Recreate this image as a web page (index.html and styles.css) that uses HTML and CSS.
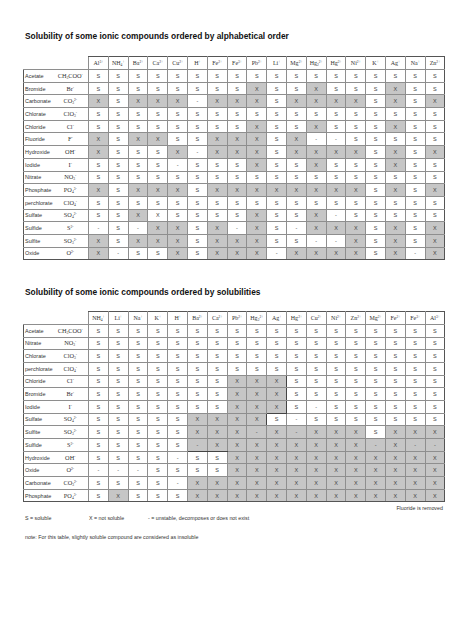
FILE: index.html
```html
<!DOCTYPE html>
<html lang="en">
<head>
<meta charset="utf-8">
<title>Solubility tables</title>
<link rel="stylesheet" href="styles.css">
</head>
<body>
<div class="sheet">
  <h1 class="title">Solubility of some ionic compounds ordered by alphabetical order</h1>
  <table class="sol first-table" id="t1"></table>
  <h1 class="title title-second">Solubility of some ionic compounds ordered by solubilities</h1>
  <table class="sol second-table" id="t2"></table>
  <p class="removed">Fluoride is removed</p>
  <div class="legend">
    <span class="lg1">S = soluble</span>
    <span class="lg2">X = not soluble</span>
    <span class="lg3">- = unstable, decomposes or does not exist</span>
  </div>
  <p class="note">note: For this table, slightly soluble compound are considered as insoluble</p>
</div>
<script src="app.js"></script>
</body>
</html>
```

FILE: styles.css
```css
html, body {
  margin: 0;
  padding: 0;
  background: #ffffff;
}
body {
  width: 474px;
  height: 632px;
  overflow: hidden;
  font-family: "Liberation Sans", Arial, sans-serif;
  color: #333;
}
.sheet {
  padding: 30px 0 0 23px;
}
.title {
  margin: 0;
  padding-left: 2px;
  font-size: 8.4px;
  line-height: 12px;
  font-weight: bold;
  color: #111;
}
.title-second {
  margin-top: 25.5px;
}
.sol {
  border-collapse: collapse;
  table-layout: fixed;
  width: 421.4px;
  margin-top: 14px;
}
.second-table {
  margin-top: 13px;
}
.c-nm { width: 29px; }
.c-fm { width: 36px; }
.c-v { width: 19.8px; }
.sol tr { height: 12.7px; }
.sol tr.hd { height: 13px; }
.sol td, .sol th {
  padding: 0;
  border: 1px solid #8e8e8e;
  text-align: center;
  vertical-align: middle;
  white-space: nowrap;
  overflow: hidden;
  line-height: 6px;
}
.sol .corner {
  border: none;
}
.sol th {
  font-family: "Liberation Serif", "Times New Roman", serif;
  font-weight: normal;
  font-size: 6px;
  color: #333;
  border-top: 1.5px solid #555;
}
.sol sup, .sol sub {
  font-size: 3.6px;
  line-height: 0;
}
.sol sup { vertical-align: 2px; }
.sol sub { vertical-align: -1px; }
.sol .nm {
  text-align: left;
  padding-left: 1px;
  font-size: 5.5px;
  color: #333;
  border-left: 1.5px solid #555;
  border-right: none;
}
.sol .fm {
  font-family: "Liberation Serif", "Times New Roman", serif;
  font-size: 6.3px;
  color: #333;
  border-left: none;
}
.sol .v {
  font-size: 5.5px;
  color: #444;
}
.sol .g {
  background: #c6c6c6;
}
.sol .lastcol {
  border-right: 1.5px solid #555;
}
.sol tr.lastrow td {
  border-bottom: 1.5px solid #555;
}
.sol .rt { border-top: 1.5px solid #444; }
.sol .rb { border-bottom: 1.5px solid #444; }
.sol .rl { border-left: 1.5px solid #444; }
.sol .rr { border-right: 1.5px solid #444; }
.removed {
  margin: 3px 0 0;
  width: 421.4px;
  padding-right: 1.5px;
  box-sizing: border-box;
  text-align: right;
  font-size: 5.3px;
  line-height: 7px;
}
.legend {
  display: flex;
  margin-top: 3px;
  padding-left: 2px;
  font-size: 5.3px;
  line-height: 7px;
}
.lg1 { width: 64px; }
.lg2 { width: 59px; }
.note {
  margin: 11.7px 0 0;
  padding-left: 2px;
  font-size: 5.3px;
  line-height: 7px;
}
```

FILE: app.js
```js
(function () {
  var I = {
    Al: 'Al<sup>3+</sup>', NH4: 'NH<sub>4</sub><sup>+</sup>', Ba: 'Ba<sup>2+</sup>',
    Ca: 'Ca<sup>2+</sup>', Cu: 'Cu<sup>2+</sup>', H: 'H<sup>+</sup>',
    Fe2: 'Fe<sup>2+</sup>', Fe3: 'Fe<sup>3+</sup>', Pb: 'Pb<sup>2+</sup>',
    Li: 'Li<sup>+</sup>', Mg: 'Mg<sup>2+</sup>', Hg22: 'Hg<sub>2</sub><sup>2+</sup>',
    Hg: 'Hg<sup>2+</sup>', Ni: 'Ni<sup>2+</sup>', K: 'K<sup>+</sup>',
    Ag: 'Ag<sup>+</sup>', Na: 'Na<sup>+</sup>', Zn: 'Zn<sup>2+</sup>'
  };
  var A = {
    Acetate: 'CH<sub>3</sub>COO<sup>-</sup>', Bromide: 'Br<sup>-</sup>',
    Carbonate: 'CO<sub>3</sub><sup>2-</sup>', Chlorate: 'ClO<sub>3</sub><sup>-</sup>',
    Chloride: 'Cl<sup>-</sup>', Fluoride: 'F<sup>-</sup>', Hydroxide: 'OH<sup>-</sup>',
    Iodide: 'I<sup>-</sup>', Nitrate: 'NO<sub>3</sub><sup>-</sup>',
    Phosphate: 'PO<sub>4</sub><sup>3-</sup>', perchlorate: 'ClO<sub>4</sub><sup>-</sup>',
    Sulfate: 'SO<sub>4</sub><sup>2-</sup>', Sulfide: 'S<sup>2-</sup>',
    Sulfite: 'SO<sub>3</sub><sup>2-</sup>', Oxide: 'O<sup>2-</sup>'
  };

  function build(id, cols, rows, region, mode) {
    var t = document.getElementById(id);
    var n = rows.length;
    function inR(i, j) {
      if (!region) return false;
      var r = region[i];
      return !!r && j >= r[0] && j <= r[1];
    }
    var h = '<colgroup><col class="c-nm"><col class="c-fm">';
    for (var k = 0; k < 18; k++) h += '<col class="c-v">';
    h += '</colgroup><tr class="hd"><td class="corner" colspan="2"></td>';
    cols.forEach(function (c, j) {
      h += '<th class="ion' + (j === 17 ? ' lastcol' : '') + '">' + I[c] + '</th>';
    });
    h += '</tr>';
    rows.forEach(function (row, i) {
      var name = row[0], vals = row[1];
      h += '<tr' + (i === n - 1 ? ' class="lastrow"' : '') + '>';
      h += '<td class="nm">' + name + '</td><td class="fm">' + A[name] + '</td>';
      for (var j = 0; j < 18; j++) {
        var ch = vals.charAt(j);
        var cls = ['v'];
        var inside = inR(i, j);
        var gray = mode === 1 ? ch === 'X' : (ch === 'X' || (inside && ch !== 'S'));
        if (gray) cls.push('g');
        if (j === 17) cls.push('lastcol');
        if (inside) {
          if (i > 0 && !inR(i - 1, j)) cls.push('rt');
          if (i < n - 1 && !inR(i + 1, j)) cls.push('rb');
          if (!inR(i, j - 1)) cls.push('rl');
          if (j < 17 && !inR(i, j + 1)) cls.push('rr');
        }
        h += '<td class="' + cls.join(' ') + '">' + (ch === 'x' ? 'X' : ch) + '</td>';
      }
      h += '</tr>';
    });
    t.innerHTML = h;
  }

  build('t1',
    ['Al','NH4','Ba','Ca','Cu','H','Fe2','Fe3','Pb','Li','Mg','Hg22','Hg','Ni','K','Ag','Na','Zn'],
    [
      ['Acetate',     'SSSSSSSSSSSSSSSSSS'],
      ['Bromide',     'SSSSSSSSXSSXSSSXSS'],
      ['Carbonate',   'XSXXX-XXXSXXXXSXSX'],
      ['Chlorate',    'SSSSSSSSSSSSSSSSSS'],
      ['Chloride',    'SSSSSSSSXSSXSSSXSS'],
      ['Fluoride',    'XSXXSSXXXSX--SSSSS'],
      ['Hydroxide',   'XSSSX-XXXSXXXXSXSX'],
      ['Iodide',      'SSSS-SSSXSSXSSSXSS'],
      ['Nitrate',     'SSSSSSSSSSSSSSSSSS'],
      ['Phosphate',   'XSXXXSXXXXXXXXSXSX'],
      ['perchlorate', 'SSSSSSSSSSSSSSSSSS'],
      ['Sulfate',     'SSXxSSSSXSSX-SSSSS'],
      ['Sulfide',     '-S-XXSX-XS-XXXSXSX'],
      ['Sulfite',     'XSXXXSXXXSS--XSXSX'],
      ['Oxide',       'X-SSXSXXX-XXXXSX-X']
    ], null, 1);

  build('t2',
    ['NH4','Li','Na','K','H','Ba','Ca','Pb','Hg22','Ag','Hg','Cu','Ni','Zn','Mg','Fe2','Fe3','Al'],
    [
      ['Acetate',     'SSSSSSSSSSSSSSSSSS'],
      ['Nitrate',     'SSSSSSSSSSSSSSSSSS'],
      ['Chlorate',    'SSSSSSSSSSSSSSSSSS'],
      ['perchlorate', 'SSSSSSSSSSSSSSSSSS'],
      ['Chloride',    'SSSSSSSXXXSSSSSSSS'],
      ['Bromide',     'SSSSSSSXXXSSSSSSSS'],
      ['Iodide',      'SSSSSSSXXXS-SSSSSS'],
      ['Sulfate',     'SSSSSXXXXS-SSSSSSS'],
      ['Sulfite',     'SSSSSXXX-X-XXXSXXX'],
      ['Sulfide',     'SSSSS-XXXXXXXX-X--'],
      ['Hydroxide',   'SSSS-SSXXXXXXXXXXX'],
      ['Oxide',       '---SSSSXXXXXXXXXXX'],
      ['Carbonate',   'SSSS-XXXXXXXXXXXXX'],
      ['Phosphate',   'SXSSSXXXXXXXXXXXXX']
    ],
    [null, null, null, null, [7, 9], [7, 9], [7, 9], [5, 8], [5, 17], [5, 17], [7, 17], [7, 17], [5, 17], [5, 17]],
    2);
})();
```
